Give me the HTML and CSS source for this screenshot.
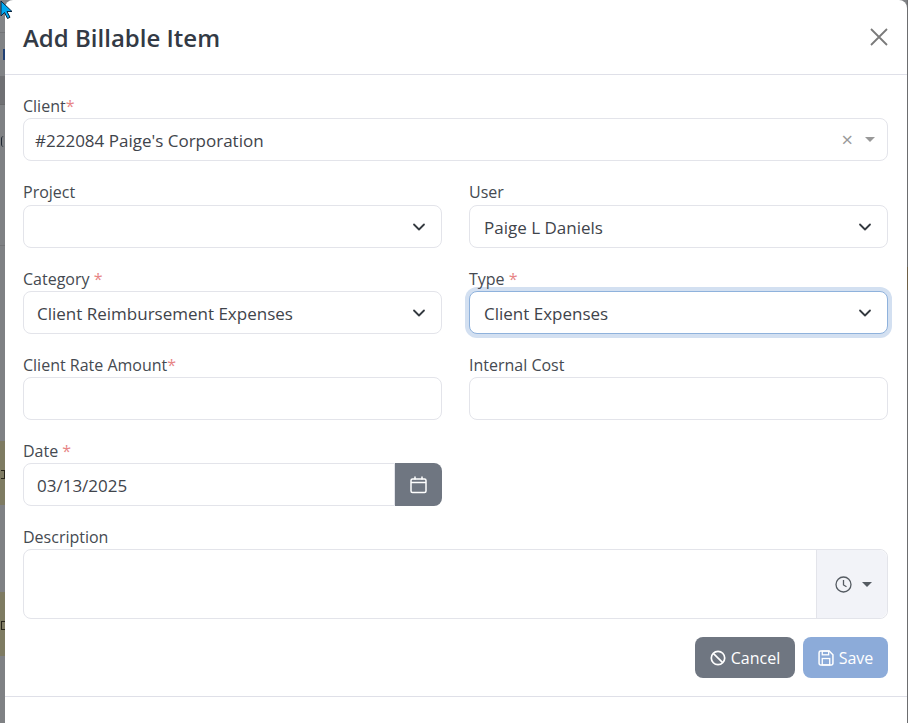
FILE: index.html
```html
<!DOCTYPE html>
<html lang="en">
<head>
  <meta charset="UTF-8" />
  <title>Add Billable Item</title>
  <link rel="stylesheet" href="styles.css">
</head>
<body>

<div class="backdrop-left">
  <div class="strip s-top"></div>
  <div class="strip s-link"><i class="frag frag-link"></i></div>
  <div class="strip s-band"></div>
  <div class="strip s-text"><i class="frag frag-text"></i></div>
  <div class="strip s-plain"></div>
  <div class="strip s-olive s-olive-a"><i class="frag frag-olive-a"></i></div>
  <div class="strip s-gap"></div>
  <div class="strip s-olive s-olive-b"><i class="frag frag-olive-b"></i></div>
</div>

<div class="modal">
  <div class="modal-header">
    <h1>Add Billable Item</h1>
    <svg class="close-icon" width="20" height="20" viewBox="0 0 20 20"><path d="M2 2L18 18M18 2L2 18" stroke="#7a7a7a" stroke-width="1.800" fill="none"/></svg>
  </div>

  <div class="modal-body">
    <div class="field">
      <label>Client<span class="req">*</span></label>
      <div class="control">
        <span class="value client-value">#222084 Paige's Corporation</span>
        <span class="clear-x">×</span>
        <span class="caret"></span>
      </div>
    </div>

    <div class="row row-first">
      <div class="field">
        <label>Project</label>
        <div class="control select"><span class="value"></span><svg class="chevron" width="16" height="16" viewBox="0 0 16 16"><path d="M3 5.500l5 5 5-5" stroke="#343a40" stroke-width="1.800" stroke-linecap="round" stroke-linejoin="round" fill="none"/></svg></div>
      </div>
      <div class="field">
        <label>User</label>
        <div class="control select"><span class="value">Paige L Daniels</span><svg class="chevron" width="16" height="16" viewBox="0 0 16 16"><path d="M3 5.500l5 5 5-5" stroke="#343a40" stroke-width="1.800" stroke-linecap="round" stroke-linejoin="round" fill="none"/></svg></div>
      </div>
    </div>

    <div class="row">
      <div class="field">
        <label>Category <span class="req">*</span></label>
        <div class="control select"><span class="value">Client Reimbursement Expenses</span><svg class="chevron" width="16" height="16" viewBox="0 0 16 16"><path d="M3 5.500l5 5 5-5" stroke="#343a40" stroke-width="1.800" stroke-linecap="round" stroke-linejoin="round" fill="none"/></svg></div>
      </div>
      <div class="field">
        <label>Type <span class="req">*</span></label>
        <div class="control select focused"><span class="value">Client Expenses</span><svg class="chevron" width="16" height="16" viewBox="0 0 16 16"><path d="M3 5.500l5 5 5-5" stroke="#343a40" stroke-width="1.800" stroke-linecap="round" stroke-linejoin="round" fill="none"/></svg></div>
      </div>
    </div>

    <div class="row">
      <div class="field">
        <label>Client Rate Amount<span class="req">*</span></label>
        <div class="control"></div>
      </div>
      <div class="field">
        <label>Internal Cost</label>
        <div class="control"></div>
      </div>
    </div>

    <div class="row">
      <div class="field">
        <label>Date <span class="req">*</span></label>
        <div class="date-group">
          <div class="control"><span class="value">03/13/2025</span></div>
          <div class="date-btn">
            <svg width="17" height="18" viewBox="0 0 17 18"><rect x="1" y="3" width="15" height="13.500" rx="1.500" stroke="#fff" stroke-width="1.500" fill="none"/><path d="M1 6.500h15M5 .5v3M12 .5v3" stroke="#fff" stroke-width="1.500" fill="none"/></svg>
          </div>
        </div>
      </div>
      <div class="field"></div>
    </div>

    <div class="field field-desc">
      <label>Description</label>
      <div class="desc-group">
        <div class="desc-input"></div>
        <div class="desc-addon">
          <svg width="17" height="17" viewBox="0 0 17 17"><circle cx="8.500" cy="8.500" r="7.500" stroke="#555b62" stroke-width="1.300" fill="none"/><path d="M8.500 4v5l3 1.800" stroke="#555b62" stroke-width="1.300" fill="none"/></svg>
          <span class="addon-caret"></span>
        </div>
      </div>
    </div>

    <div class="actions">
      <div class="btn btn-cancel">
        <svg width="16" height="16" viewBox="0 0 16 16"><circle cx="8" cy="8" r="6.700" stroke="#fff" stroke-width="1.700" fill="none"/><path d="M3.300 3.300l9.400 9.400" stroke="#fff" stroke-width="1.700"/></svg>
        Cancel
      </div>
      <div class="btn btn-save">
        <svg width="16" height="16" viewBox="0 0 15 15"><path d="M1 2.500A1.500 1.500 0 0 1 2.500 1h8L14 4.500v8a1.500 1.500 0 0 1-1.500 1.500h-10A1.500 1.500 0 0 1 1 12.500z" stroke="#fff" stroke-width="1.400" fill="none"/><rect x="4" y="1" width="6" height="3.500" stroke="#fff" stroke-width="1.200" fill="none"/><rect x="4" y="8" width="7" height="6" stroke="#fff" stroke-width="1.200" fill="none"/></svg>
        Save
      </div>
    </div>
  </div>

  <div class="modal-footer"></div>
</div>

<div class="backdrop-right">
  <div class="edge-spacer"></div>
  <div class="edge-brown"></div>
</div>

<svg class="cursor" width="13" height="20" viewBox="0 0 13 20"><path d="M1 1v15l3.500-3.500 3 6 2.500-1.200-3-5.800h5z" fill="#00a8f0" stroke="#0a2540" stroke-width="1"/></svg>

</body>
</html>
```

FILE: styles.css
```css
html, body {
  height: 100%;
}

body {
  margin: 0;
  display: flex;
  height: 723px;
  overflow: hidden;
  background: #7f8184;
  font-family: "Open Sans", "Noto Sans", sans-serif;
  font-size: 16px;
  color: #3f444b;
}

/* page behind the modal, only a sliver of it shows */
.backdrop-left {
  width: 5px;
  flex: none;
  display: flex;
  flex-direction: column;
}

.strip {
  overflow: hidden;
}

.s-top { height: 32px; background: #828487; border-bottom: 1px solid #737477; }
.s-link { height: 43px; background: #808285; }
.s-band { height: 28px; background: #6f7073; border-bottom: 1px solid #68696b; }
.s-text { height: 140px; background: #7f8184; border-bottom: 1px solid #737477; }
.s-plain { height: 195px; background: #7f8184; }
.s-olive { height: 64px; background: #7e7b62; }
.s-gap { height: 87px; background: #7f8184; }

/* cut off letters of the page behind */
.frag {
  display: block;
  box-sizing: border-box;
  width: 4px;
}

.frag-link { height: 11px; margin: 16px 0 0 1px; border-right: 2px solid #1f3f73; }
.frag-text { height: 11px; margin: 31px 0 0 1px; border-left: 1px solid #1d2530; border-radius: 3px 0 0 3px; }
.frag-olive-a { height: 9px; margin: 29px 0 0 1px; border: 1px solid #26241a; border-left: 0; }
.frag-olive-b { height: 9px; margin: 29px 0 0 1px; border: 1px solid #26241a; border-right: 0; }

.backdrop-right {
  width: 1px;
  flex: none;
  background: #6d6e70;
}

.edge-spacer { height: 267px; }
.edge-brown { height: 23px; background: #6e6048; }

.modal {
  flex: 1;
  height: 732px;
  background: #fff;
  border-radius: 8px;
  display: flex;
  flex-direction: column;
}

.modal-header {
  height: 74px;
  padding: 0 18px;
  display: flex;
  align-items: center;
  justify-content: space-between;
  border-bottom: 1px solid #dfe0e8;
}

h1 {
  margin: 0;
  font-size: 24px;
  font-weight: 600;
  color: #333a45;
}

.modal-body {
  padding: 20px 19px 0 18px;
  display: flex;
  flex-direction: column;
}

.row {
  display: grid;
  grid-template-columns: 1fr 1fr;
  gap: 27px;
}

.field {
  margin-bottom: 20px;
  min-width: 0;
}

.field-desc {
  margin-bottom: 18px;
}

label {
  display: block;
  height: 23px;
  line-height: 23px;
  font-size: 16px;
  color: #454a51;
}

.row-first label {
  height: 24px;
}

.req {
  color: #e78585;
}

.control {
  height: 41px;
  border: 1px solid #e3e4ea;
  border-radius: 8px;
  background: #fff;
  display: flex;
  align-items: center;
  padding: 0 14px;
}

.value {
  flex: 1;
  white-space: nowrap;
  font-size: 17px;
  padding-top: 2px;
}

.row .field:first-child .value {
  margin-left: -1px;
}

.client-value {
  margin-left: -3px;
}

.clear-x {
  color: #999;
  font-size: 20px;
  margin-right: 12px;
}

.caret {
  width: 0;
  height: 0;
  border-left: 5px solid transparent;
  border-right: 5px solid transparent;
  border-top: 5px solid #999;
  margin-right: -2px;
}

.chevron {
  flex: none;
}

.focused {
  border-color: #8fb2dc;
  box-shadow: 0 0 0 4px #d3e0f1;
}

.date-group {
  display: flex;
}

.date-group .control {
  flex: 1;
  border-radius: 8px 0 0 8px;
}

.date-btn {
  width: 47px;
  background: #6f7681;
  border-radius: 0 8px 8px 0;
  display: flex;
  align-items: center;
  justify-content: center;
}

.desc-group {
  display: flex;
  height: 68px;
  border: 1px solid #e3e4ea;
  border-radius: 8px;
}

.desc-input {
  flex: 1;
}

.desc-addon {
  width: 71px;
  background: #f2f3f8;
  border-left: 1px solid #e3e4ea;
  border-radius: 0 8px 8px 0;
  display: flex;
  align-items: center;
  justify-content: center;
  gap: 10px;
  padding-left: 3px;
  box-sizing: border-box;
}

.addon-caret {
  width: 0;
  height: 0;
  border-left: 5px solid transparent;
  border-right: 5px solid transparent;
  border-top: 5px solid #555b62;
}

.actions {
  display: flex;
  justify-content: flex-end;
  gap: 8px;
}

.btn {
  height: 41px;
  border-radius: 8px;
  color: #fff;
  display: flex;
  align-items: center;
  justify-content: center;
  gap: 5px;
}

.btn-cancel {
  width: 100px;
  background: #6f7681;
}

.btn-save {
  width: 85px;
  background: #8cabd9;
}

.modal-footer {
  margin-top: 18px;
  border-top: 1px solid #dfe0e8;
}

.cursor {
  position: absolute;
  left: 0;
  top: 0;
}
```
